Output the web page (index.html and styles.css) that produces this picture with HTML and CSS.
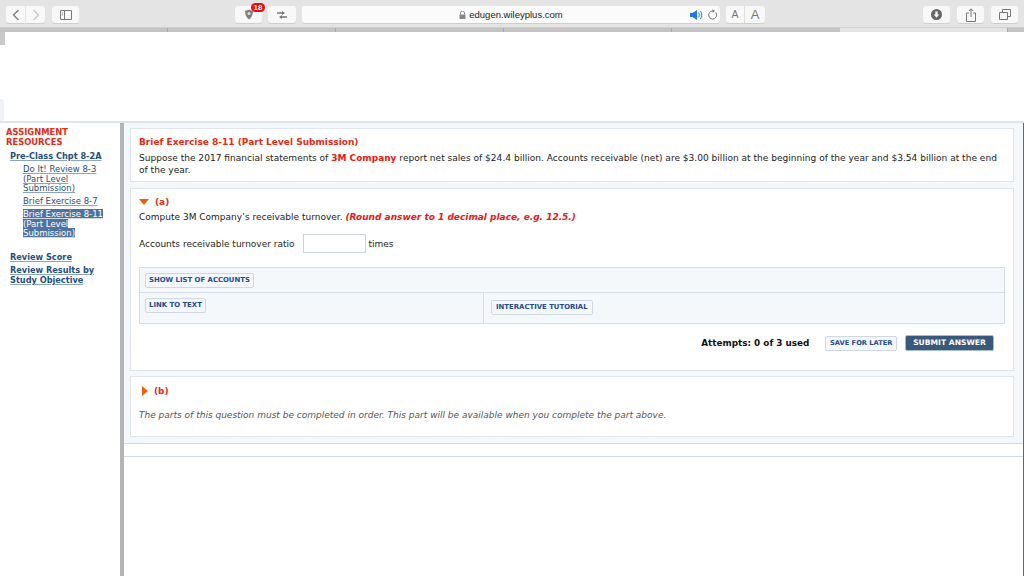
FILE: index.html
```html
<!DOCTYPE html>
<html lang="en">
<head>
<meta charset="utf-8">
<title>WileyPLUS</title>
<link rel="stylesheet" href="styles.css">
</head>
<body>
<header class="toolbar">
  <div class="nav-group">
    <span class="tbtn back"><svg width="10" height="12" viewBox="0 0 10 12"><path d="M7.500 1 2.500 6l5 5" fill="none" stroke="#777" stroke-width="1.200"/></svg></span>
    <span class="tbtn forward"><svg width="10" height="12" viewBox="0 0 10 12"><path d="M2.500 1l5 5-5 5" fill="none" stroke="#c4c4c4" stroke-width="1.200"/></svg></span>
  </div>
  <span class="tbtn sidebar-btn"><svg width="12" height="10" viewBox="0 0 12 10"><path d="M.5.5h11v9H.5zM4.500.5v9" fill="none" stroke="#777"/><path d="M2 3h1M2 5h1" stroke="#777"/></svg></span>
  <div class="toolbar-middle">
    <span class="tbtn shield"><svg width="10" height="11" viewBox="0 0 10 11"><path d="M1 2 5 .5 9 2C9 6 7.500 8.800 5 10.500 2.500 8.800 1 6 1 2z" fill="#808080"/><circle cx="5" cy="4.500" r="1.600" fill="#ddd"/></svg><b class="badge">18</b></span>
    <span class="tbtn swap"><svg width="10" height="8" viewBox="0 0 10 8"><path d="M0 1.300h5V0l3 2-3 2V2.700H0zM10 5.300H5V4L2 6l3 2V6.700h5z" fill="#777"/></svg></span>
    <div class="urlbar">
      <div class="url"><svg class="lock" width="7" height="8" viewBox="0 0 7 8"><path d="M1.500 3.500V2a2 2 0 0 1 4 0v1.500" fill="none" stroke="#888"/><path d="M.5 3.500h6V8h-6z" fill="#888"/></svg>edugen.wileyplus.com</div>
      <svg class="speaker" width="13" height="10" viewBox="0 0 13 10"><path d="M0 3h2.500L7 0v10L2.500 7H0z" fill="#1e78f0"/><path d="M8.500 2.500c1 1.500 1 3.500 0 5M10.500 1c1.600 2.500 1.600 5.500 0 8" fill="none" stroke="#1e78f0"/></svg>
      <svg class="reload" width="10" height="11" viewBox="0 0 10 11"><path d="M7.800 3.500a4 4 0 1 1-3.300-1.500" fill="none" stroke="#777"/><path d="M4.500 .2 7 2 4.500 3.800z" fill="#777"/></svg>
    </div>
    <div class="font-group"><span class="small-a">A</span><span class="big-a">A</span></div>
  </div>
  <div class="toolbar-right">
    <span class="tbtn action"><svg width="11" height="11" viewBox="0 0 11 11"><circle cx="5.500" cy="5.500" r="5.500" fill="#666"/><path d="M4.300 2.500h2.400v3h1.600L5.500 8.700 2.700 5.500h1.600z" fill="#f5f5f5"/></svg></span>
    <span class="tbtn action"><svg width="10" height="14" viewBox="0 0 10 14"><path d="M3 5H.5v8.500h9V5H7M5 9V1M2.800 3 5 .8 7.200 3" fill="none" stroke="#777"/></svg></span>
    <span class="tbtn action"><svg width="12" height="11" viewBox="0 0 12 11"><path d="M.5 3.500h8v7h-8zM3.500 3.500v-3h8v7h-3" fill="none" stroke="#777"/></svg></span>
  </div>
</header>
<div class="tabstrip">
  <span class="tab"></span><span class="tab"></span><span class="tab"></span><span class="tab"></span><span class="tab plain"></span><span class="tab tab-active"></span><span class="tab-rest"></span>
</div>
<div class="banner"><span class="banner-notch"></span><span class="banner-tab"></span></div>
<main class="page">
  <nav class="side">
    <h2 class="side-title">ASSIGNMENT RESOURCES</h2>
    <a class="side-head" href="#">Pre-Class Chpt 8-2A</a>
    <ul class="side-list">
      <li><a href="#">Do It! Review 8-3 (Part Level Submission)</a></li>
      <li><a href="#">Brief Exercise 8-7</a></li>
      <li><a class="current" href="#">Brief Exercise 8-11 (Part Level Submission)</a></li>
    </ul>
    <a class="side-link" href="#">Review Score</a>
    <a class="side-link" href="#">Review Results by Study Objective</a>
  </nav>
  <section class="content">
    <div class="panels">
      <div class="panel intro">
        <h1>Brief Exercise 8-11 (Part Level Submission)</h1>
        <p>Suppose the 2017 financial statements of <strong>3M Company</strong> report net sales of $24.4 billion. Accounts receivable (net) are $3.00 billion at the beginning of the year and $3.54 billion at the end of the year.</p>
      </div>
      <div class="panel part-a">
        <div class="part-label"><span class="tri-down"></span>(a)</div>
        <p class="prompt">Compute 3M Company’s receivable turnover. <em>(Round answer to 1 decimal place, e.g. 12.5.)</em></p>
        <div class="answer"><span>Accounts receivable turnover ratio</span><span class="field"></span><span class="unit">times</span></div>
        <div class="tools">
          <div class="tools-row top"><button class="chip">SHOW LIST OF ACCOUNTS</button></div>
          <div class="tools-row bottom">
            <div class="cell left"><button class="chip">LINK TO TEXT</button></div>
            <div class="cell right"><button class="chip">INTERACTIVE TUTORIAL</button></div>
          </div>
        </div>
        <div class="submit-row">
          <span class="attempts">Attempts: 0 of 3 used</span>
          <button class="chip save">SAVE FOR LATER</button>
          <button class="submit">SUBMIT ANSWER</button>
        </div>
      </div>
      <div class="panel part-b">
        <div class="part-label"><span class="tri-right"></span>(b)</div>
        <p class="locked">The parts of this question must be completed in order. This part will be available when you complete the part above.</p>
      </div>
    </div>
    <div class="rule"></div>
  </section>
</main>
</body>
</html>
```
FILE: styles.css
```css
* { box-sizing: border-box; }
html, body { margin: 0; height: 576px; overflow: hidden; background: #fff; }
body { font-family: "DejaVu Sans", Verdana, sans-serif; font-size: 9px; color: #222; }

.toolbar { height: 28px; background: #e4e4e4; border-bottom: 1px solid #d0d0d0; display: flex; align-items: flex-start; padding: 6px 6px 0; }
.tbtn { height: 17px; background: #f8f8f8; border-radius: 3px; box-shadow: 0 1px 0 #cfcfcf; display: flex; align-items: center; justify-content: center; position: relative; flex: none; }
.nav-group { display: flex; width: 39px; }
.back, .forward { width: 19px; }
.back { border-radius: 3px 0 0 3px; margin-right: 1px; }
.forward { border-radius: 0 3px 3px 0; }
.sidebar-btn { width: 27px; margin-left: 7px; }
.toolbar-middle { display: flex; margin-left: 156px; }
.shield { width: 27px; }
.badge { position: absolute; top: -3px; right: -3px; width: 14px; height: 9px; background: #f00a0a; color: #fff; border-radius: 5px; font: 700 8px/9px "Liberation Sans", sans-serif; text-align: center; }
.swap { width: 28px; margin-left: 6px; }
.urlbar { width: 418px; height: 17px; margin-left: 6px; background: #fbfbfb; border-radius: 3px; box-shadow: 0 1px 0 #cfcfcf; position: relative; display: flex; justify-content: center; align-items: center; }
.url { font: 9.500px "Liberation Sans", Arial, sans-serif; color: #222; display: flex; align-items: center; gap: 3px; }
.speaker { position: absolute; left: 388px; top: 4px; }
.reload { position: absolute; left: 406px; top: 3px; }
.font-group { width: 39px; height: 17px; margin-left: 6px; background: #f8f8f8; border-radius: 3px; box-shadow: 0 1px 0 #cfcfcf; display: flex; font-family: "Liberation Sans", Arial, sans-serif; color: #777; text-align: center; }
.small-a { width: 19px; font-size: 10.500px; line-height: 17px; border-right: 1px solid #ddd; }
.big-a { flex: 1; font-size: 13px; line-height: 17px; }
.toolbar-right { display: flex; gap: 7px; margin-left: auto; }
.action { width: 27px; }

.tabstrip { height: 4px; background: #c3c3c3; display: flex; }
.tab { height: 4px; width: 168px; border-right: 1px solid #a9a9a9; flex: none; }
.tab.plain { border-right: 0; }
.tab-active { background: #e4e4e4; }
.tab-rest { flex: 1; }

.banner { height: 91px; background: #fff; position: relative; border-bottom: 2px solid #dde5ec; }
.banner-notch { display: block; width: 5px; height: 13px; background: #c8c8c8; }
.banner-tab { position: absolute; left: 0; bottom: 0; width: 4px; height: 22px; background: #eef3f7; border-radius: 0 3px 3px 0; }

.page { display: flex; height: 453px; }
.side { width: 120px; flex: none; padding: 4px 0 0 6px; font-size: 8.500px; line-height: 10px; }
.side-title { margin: 0; color: #e62b14; font-size: 8.400px; line-height: 10px; font-weight: 700; width: 80px; }
.side a { color: #1f4f7d; text-decoration: underline; text-decoration-color: #8aa5bd; }
.side-head { display: block; margin: 4px 0 0 4px; font-weight: 700; font-size: 8.200px; }
.side-list { list-style: none; margin: 4px 0 0; padding: 0 0 0 17px; width: 100px; line-height: 9.700px; }
.side-list li { margin-bottom: 3px; }
.side a.current { background: #4f739e; color: #fff; text-decoration-color: #cdd9e6; }
.side-link { display: block; margin: 0 0 3px 4px; font-weight: 700; font-size: 8.200px; width: 96px; }
.side-list + .side-link { margin-top: 13px; }

.content { flex: 1; min-width: 0; border-left: 4px solid #b5b5b5; border-right: 1px solid #666; font-size: 9px; }
.panels { background: #f5f8fb; padding: 5px 9px 6px 6px; }
.panel { background: #fff; border: 1px solid #dde4eb; }
.panel p { margin: 0; }
.intro { height: 54px; padding: 7px 14px 0 8px; line-height: 12px; margin-bottom: 6px; }
.intro h1 { margin: 0 0 4px; font-size: 9px; line-height: 12px; color: #e62b14; font-weight: 700; }
.intro p { font-size: 9.060px; }
.intro strong { color: #f01414; font-size: 9px; }
.part-a { height: 183px; padding: 6px 8px 0; margin-bottom: 5px; }
.part-label { display: flex; align-items: center; color: #e62b14; font-weight: 700; height: 14px; font-size: 9px; }
.tri-down { width: 0; height: 0; border: 5px solid transparent; border-top: 6px solid #f25a0e; border-bottom: 0; margin-right: 6px; }
.tri-right { width: 0; height: 0; border: 5px solid transparent; border-left: 6px solid #f25a0e; border-right: 0; margin: 0 6px 0 3px; }
.prompt { margin-top: 2px !important; line-height: 12px; }
.prompt em { color: #f01414; font-weight: 700; }
.answer { display: flex; align-items: center; gap: 8px; margin-top: 11px; height: 19px; }
.field { width: 63px; height: 19px; background: #fff; border: 1px solid #ccd3da; }
.unit { margin-left: -5px; }
.tools { margin-top: 14px; border: 1px solid #d5dde6; background: #f5f8fb; }
.tools-row.top { height: 25px; border-bottom: 1px solid #d5dde6; padding: 5px 0 0 5px; }
.tools-row.bottom { height: 30px; display: flex; }
.cell.left { width: 344px; border-right: 1px solid #d5dde6; padding: 5px 0 0 5px; }
.cell.right { flex: 1; padding: 7px 0 0 7px; }
.chip { display: block; height: 15px; padding: 0 3px; border: 1px solid #cfd8e2; border-radius: 2px; background: #f3f6fa; color: #254b8c; font: 700 6.900px/13px "DejaVu Sans", Verdana, sans-serif; }
.cell.right .chip { padding: 0 4px; }
.submit-row { display: flex; align-items: center; justify-content: flex-end; height: 18px; margin-top: 10px; padding-right: 11px; }
.attempts { font-size: 8.850px; font-weight: 700; color: #111; margin-right: 16px; }
.chip.save { margin-right: 8px; font-size: 6.700px; padding: 0 3.500px; }
.submit { height: 16px; width: 89px; padding: 0; border: 1px solid #a9bdd1; border-radius: 2px; background: #38597a; color: #fff; font: 700 7.600px/14px "DejaVu Sans", Verdana, sans-serif; }
.part-b { height: 61px; padding: 7px 8px 0; }
.locked { margin-top: 11px !important; font-style: italic; color: #555; line-height: 12px; }
.rule { height: 14px; border-top: 1px solid #d3dae2; border-bottom: 1px solid #d3dae2; }
```
